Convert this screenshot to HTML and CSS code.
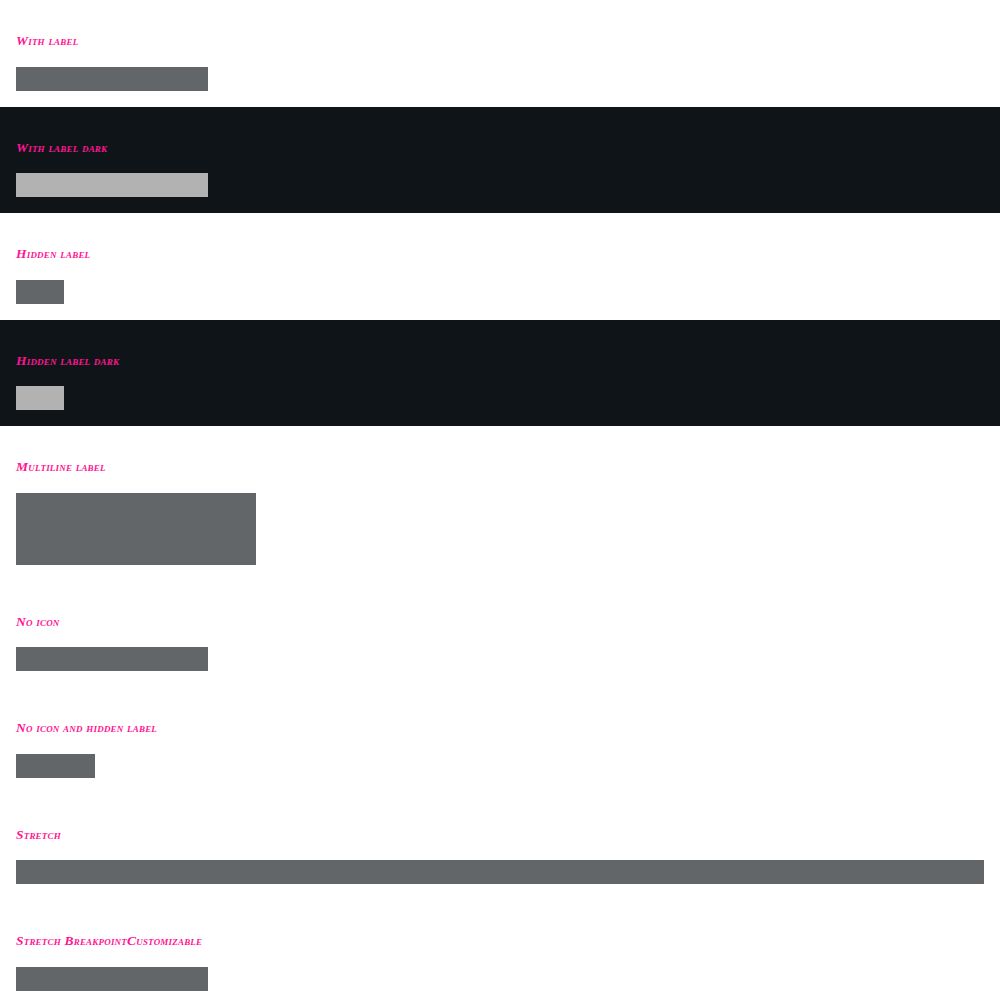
FILE: index.html
```html
<!DOCTYPE html>
<html>
<head>
<meta charset="utf-8">
<link rel="stylesheet" href="styles.css">
</head>
<body>
  <section class="story">
    <h3 class="label">With label</h3>
    <div class="bar w192"></div>
  </section>
  <section class="story dark">
    <h3 class="label">With label dark</h3>
    <div class="bar w192"></div>
  </section>
  <section class="story">
    <h3 class="label">Hidden label</h3>
    <div class="bar w48"></div>
  </section>
  <section class="story dark">
    <h3 class="label">Hidden label dark</h3>
    <div class="bar w48"></div>
  </section>
  <section class="story">
    <h3 class="label">Multiline label</h3>
    <div class="bar w240 tall"></div>
  </section>
  <section class="story">
    <h3 class="label">No icon</h3>
    <div class="bar w192"></div>
  </section>
  <section class="story">
    <h3 class="label">No icon and hidden label</h3>
    <div class="bar w79"></div>
  </section>
  <section class="story">
    <h3 class="label">Stretch</h3>
    <div class="bar stretch"></div>
  </section>
  <section class="story">
    <h3 class="label">Stretch BreakpointCustomizable</h3>
    <div class="bar w192"></div>
  </section>
</body>
</html>
```

FILE: styles.css
```css
html, body {
  margin: 0;
  padding: 0;
  background: #ffffff;
}

.story {
  padding: 16px;
  background: #ffffff;
}

.story.dark {
  background: #0f1418;
}

.label {
  margin: 18px 0 18px 0;
  height: 14.5px;
  line-height: 14.5px;
  font-family: "Liberation Serif", "Times New Roman", serif;
  font-size: 13.5px;
  letter-spacing: 0.2px;
  font-weight: bold;
  font-style: italic;
  font-variant: small-caps;
  color: #ff1493;
}

.bar {
  height: 24px;
  background: #636669;
}

.dark .bar {
  background: #b2b2b2;
}

.w192 { width: 192px; }
.w48 { width: 48px; }
.w79 { width: 79px; }
.w240 { width: 240px; }
.tall { height: 72px; }
.stretch { width: 100%; }
```
